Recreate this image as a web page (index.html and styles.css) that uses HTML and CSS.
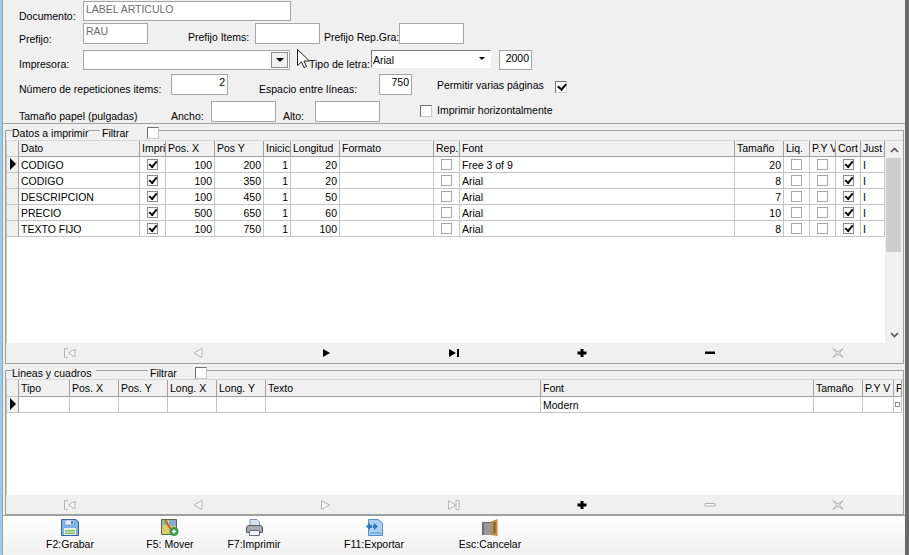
FILE: index.html
```html
<!DOCTYPE html>
<html lang="es">

<head>
    <meta charset="UTF-8">
    <title>Etiquetas</title>
    <link rel="stylesheet" href="styles.css">
</head>

<body>
    <div class="window">

        <!-- Datos generales -->
        <section class="form">
            <div class="row row-1">
                <label class="lbl l-doc">Documento:</label>
                <div class="box box-doc off">LABEL ARTICULO</div>
            </div>
            <div class="row row-2">
                <label class="lbl l-pre">Prefijo:</label>
                <div class="box box-pre off">RAU</div>
                <label class="lbl l-items">Prefijo Items:</label>
                <div class="box box-items"></div>
                <label class="lbl l-rep">Prefijo Rep.Gra:</label>
                <div class="box box-rep"></div>
            </div>
            <div class="row row-3">
                <label class="lbl l-imp">Impresora:</label>
                <div class="box box-imp">
                    <span class="drop"><i class="tri"></i></span>
                </div>
                <label class="lbl l-tipo">Tipo de letra:</label>
                <div class="box box-tipo">Arial<i class="tri tri-small"></i></div>
                <div class="box box-size num">2000</div>
            </div>
            <div class="row row-4">
                <label class="lbl l-num">Número de repeticiones items:</label>
                <div class="box box-num num">2</div>
                <label class="lbl l-esp">Espacio entre líneas:</label>
                <div class="box box-esp num">750</div>
                <label class="lbl l-perm">Permitir varias páginas</label>
                <span class="check check-perm on"></span>
            </div>
            <div class="row row-5">
                <label class="lbl l-tam">Tamaño papel (pulgadas)</label>
                <label class="lbl l-anc">Ancho:</label>
                <div class="box box-anc"></div>
                <label class="lbl l-alt">Alto:</label>
                <div class="box box-alt"></div>
                <span class="check check-hor"></span>
                <label class="lbl l-hor">Imprimir horizontalmente</label>
            </div>
        </section>

        <!-- Cursor del raton sobre el formulario -->
        <svg class="cursor" width="15" height="19" viewBox="0 0 15 19">
            <path d="M0.5 0.5V16.5L4.5 13L7 18.5L9.5 17.5L7 12H12.5Z" fill="#fff" stroke="#222" stroke-width="1" />
        </svg>

        <!-- Datos a imprimir -->
        <section class="group group-datos">
            <div class="legend">
                <span class="legend-text">Datos a imprimir</span>
                <span class="legend-filter">Filtrar</span>
                <span class="check check-filter"></span>
            </div>
            <div class="frame">
                <div class="grid-wrap">
                    <div class="grid datos">
                        <div class="tr head">
                            <div class="ind"></div>
                            <div>Dato</div>
                            <div>Impri</div>
                            <div>Pos. X</div>
                            <div>Pos Y</div>
                            <div>Inicic</div>
                            <div>Longitud</div>
                            <div>Formato</div>
                            <div>Rep.</div>
                            <div>Font</div>
                            <div>Tamaño</div>
                            <div>Liq.</div>
                            <div>P.Y V</div>
                            <div>Cort</div>
                            <div>Just</div>
                        </div>
                        <div class="tr">
                            <div class="ind cur"></div>
                            <div>CODIGO</div>
                            <div class="mid"><span class="cell-check on"></span></div>
                            <div class="num">100</div>
                            <div class="num">200</div>
                            <div class="num">1</div>
                            <div class="num">20</div>
                            <div></div>
                            <div class="mid"><span class="cell-check"></span></div>
                            <div>Free 3 of 9</div>
                            <div class="num">20</div>
                            <div class="mid"><span class="cell-check"></span></div>
                            <div class="mid"><span class="cell-check"></span></div>
                            <div class="mid"><span class="cell-check on"></span></div>
                            <div>I</div>
                        </div>
                        <div class="tr">
                            <div class="ind"></div>
                            <div>CODIGO</div>
                            <div class="mid"><span class="cell-check on"></span></div>
                            <div class="num">100</div>
                            <div class="num">350</div>
                            <div class="num">1</div>
                            <div class="num">20</div>
                            <div></div>
                            <div class="mid"><span class="cell-check"></span></div>
                            <div>Arial</div>
                            <div class="num">8</div>
                            <div class="mid"><span class="cell-check"></span></div>
                            <div class="mid"><span class="cell-check"></span></div>
                            <div class="mid"><span class="cell-check on"></span></div>
                            <div>I</div>
                        </div>
                        <div class="tr">
                            <div class="ind"></div>
                            <div>DESCRIPCION</div>
                            <div class="mid"><span class="cell-check on"></span></div>
                            <div class="num">100</div>
                            <div class="num">450</div>
                            <div class="num">1</div>
                            <div class="num">50</div>
                            <div></div>
                            <div class="mid"><span class="cell-check"></span></div>
                            <div>Arial</div>
                            <div class="num">7</div>
                            <div class="mid"><span class="cell-check"></span></div>
                            <div class="mid"><span class="cell-check"></span></div>
                            <div class="mid"><span class="cell-check on"></span></div>
                            <div>I</div>
                        </div>
                        <div class="tr">
                            <div class="ind"></div>
                            <div>PRECIO</div>
                            <div class="mid"><span class="cell-check on"></span></div>
                            <div class="num">500</div>
                            <div class="num">650</div>
                            <div class="num">1</div>
                            <div class="num">60</div>
                            <div></div>
                            <div class="mid"><span class="cell-check"></span></div>
                            <div>Arial</div>
                            <div class="num">10</div>
                            <div class="mid"><span class="cell-check"></span></div>
                            <div class="mid"><span class="cell-check"></span></div>
                            <div class="mid"><span class="cell-check on"></span></div>
                            <div>I</div>
                        </div>
                        <div class="tr">
                            <div class="ind"></div>
                            <div>TEXTO FIJO</div>
                            <div class="mid"><span class="cell-check on"></span></div>
                            <div class="num">100</div>
                            <div class="num">750</div>
                            <div class="num">1</div>
                            <div class="num">100</div>
                            <div></div>
                            <div class="mid"><span class="cell-check"></span></div>
                            <div>Arial</div>
                            <div class="num">8</div>
                            <div class="mid"><span class="cell-check"></span></div>
                            <div class="mid"><span class="cell-check"></span></div>
                            <div class="mid"><span class="cell-check on"></span></div>
                            <div>I</div>
                        </div>
                    </div>
                    <div class="scrollbar">
                        <span class="sb-btn"><svg width="9" height="6" viewBox="0 0 9 6"><path d="M1 5L4.5 1.5L8 5" fill="none" stroke="#555" stroke-width="1.6" /></svg></span>
                        <span class="sb-thumb"></span>
                        <span class="sb-space"></span>
                        <span class="sb-btn"><svg width="9" height="6" viewBox="0 0 9 6"><path d="M1 1L4.5 4.5L8 1" fill="none" stroke="#555" stroke-width="1.6" /></svg></span>
                    </div>
                </div>
                <div class="nav">
                    <svg class="ico" width="12" height="10" viewBox="0 0 12 10"><path d="M0.5 1V9M4 0.5H0.5M4 9.5H0.5M11 1V9L4.5 5Z" fill="#f8f8f8" stroke="#b4b4b4" /></svg>
                    <svg class="ico" width="12" height="10" viewBox="0 0 12 10"><path d="M10 0.5V9.5L2 5Z" fill="#f8f8f8" stroke="#b4b4b4" /></svg>
                    <svg class="ico" width="12" height="10" viewBox="0 0 12 10"><path d="M3 1V9L10 5Z" fill="#000" /></svg>
                    <svg class="ico" width="12" height="10" viewBox="0 0 12 10"><path d="M1 1V9L8 5Z M9 1H11V9H9Z" fill="#000" /></svg>
                    <svg class="ico" width="12" height="10" viewBox="0 0 12 10"><path d="M4.5 1H7.5V3.5H10.5V6.5H7.5V9H4.5V6.5H1.5V3.5H4.5Z" fill="#000" /></svg>
                    <svg class="ico" width="12" height="10" viewBox="0 0 12 10"><path d="M1 3.5H11V6H1Z" fill="#000" /></svg>
                    <svg class="ico" width="12" height="10" viewBox="0 0 12 10"><path d="M1 0.5L6 4L11 0.5M1 9.5L6 6L11 9.5M1 0.5L4.5 5L1 9.5M11 0.5L7.5 5L11 9.5" fill="none" stroke="#b4b4b4" /></svg>
                </div>
            </div>
        </section>

        <!-- Lineas y cuadros -->
        <section class="group group-lineas">
            <div class="legend">
                <span class="legend-text">Lineas y cuadros</span>
                <span class="legend-filter">Filtrar</span>
                <span class="check check-filter"></span>
            </div>
            <div class="frame">
                <div class="grid-wrap">
                    <div class="grid lineas">
                        <div class="tr head">
                            <div class="ind"></div>
                            <div>Tipo</div>
                            <div>Pos. X</div>
                            <div>Pos. Y</div>
                            <div>Long. X</div>
                            <div>Long. Y</div>
                            <div>Texto</div>
                            <div>Font</div>
                            <div>Tamaño</div>
                            <div>P.Y V</div>
                            <div>F</div>
                        </div>
                        <div class="tr">
                            <div class="ind cur"></div>
                            <div></div>
                            <div></div>
                            <div></div>
                            <div></div>
                            <div></div>
                            <div></div>
                            <div>Modern</div>
                            <div></div>
                            <div></div>
                            <div class="mid"><span class="mini-check"></span></div>
                        </div>
                    </div>
                </div>
                <div class="nav">
                    <svg class="ico" width="12" height="10" viewBox="0 0 12 10"><path d="M0.5 1V9M4 0.5H0.5M4 9.5H0.5M11 1V9L4.5 5Z" fill="#f8f8f8" stroke="#b4b4b4" /></svg>
                    <svg class="ico" width="12" height="10" viewBox="0 0 12 10"><path d="M10 0.5V9.5L2 5Z" fill="#f8f8f8" stroke="#b4b4b4" /></svg>
                    <svg class="ico" width="12" height="10" viewBox="0 0 12 10"><path d="M1.5 0.5V9.5L9.5 5Z" fill="#f8f8f8" stroke="#b4b4b4" /></svg>
                    <svg class="ico" width="12" height="10" viewBox="0 0 12 10"><path d="M0.5 0.5V9.5L7.5 5Z M11 0.5H8V9.5H11Z" fill="#f8f8f8" stroke="#b4b4b4" /></svg>
                    <svg class="ico" width="12" height="10" viewBox="0 0 12 10"><path d="M4.5 1H7.5V3.5H10.5V6.5H7.5V9H4.5V6.5H1.5V3.5H4.5Z" fill="#000" /></svg>
                    <svg class="ico" width="12" height="10" viewBox="0 0 12 10"><path d="M1 3.5H11V6H1Z" fill="#f8f8f8" stroke="#b4b4b4" /></svg>
                    <svg class="ico" width="12" height="10" viewBox="0 0 12 10"><path d="M1 0.5L6 4L11 0.5M1 9.5L6 6L11 9.5M1 0.5L4.5 5L1 9.5M11 0.5L7.5 5L11 9.5" fill="none" stroke="#b4b4b4" /></svg>
                </div>
            </div>
        </section>

        <!-- Barra de botones -->
        <footer class="toolbar">
            <div class="tool t-save">
                <svg width="18" height="17" viewBox="0 0 18 17">
                    <path d="M0.5 0.5H15L17.5 3V16.5H0.5Z" fill="#7fb2ea" stroke="#2f62a8" />
                    <path d="M4 1H13V6H4Z" fill="#dfe8f2" stroke="#5f86b8" stroke-width="0.5" />
                    <path d="M10 2H12V5H10Z" fill="#4a78b4" />
                    <path d="M3 9H15V16H3Z" fill="#e8f0dc" />
                    <path d="M4 11H14V12.5H4ZM4 13.5H14V15H4Z" fill="#7fbf6a" />
                </svg>
                <span>F2:Grabar</span>
            </div>
            <div class="tool t-move">
                <svg width="18" height="17" viewBox="0 0 18 17">
                    <path d="M0.5 0.5H15.5V15.5H0.5Z" fill="#d8cf6a" stroke="#56684a" />
                    <path d="M1 1H7V6H1ZM10 9H15V15H10Z" fill="#8fc48a" />
                    <path d="M8 1H15V7H8Z" fill="#8aa8d8" />
                    <path d="M4 1L12 14" stroke="#d04a30" stroke-width="1.5" />
                    <circle cx="13" cy="12.5" r="4.5" fill="#3f9a4a" />
                    <path d="M11 12.5H15M13 10.5V14.5" stroke="#fff" stroke-width="1.4" />
                </svg>
                <span>F5: Mover</span>
            </div>
            <div class="tool t-print">
                <svg width="17" height="17" viewBox="0 0 17 17">
                    <path d="M4 0.5H11L13.5 3V8H4Z" fill="#d6e6f6" stroke="#7d95b0" />
                    <path d="M0.5 9Q0.5 6.5 3 6.5H14Q16.5 6.5 16.5 9V13.5H0.5Z" fill="#a8acb2" stroke="#555a60" />
                    <path d="M3.5 11.5H13.5V16.5H3.5Z" fill="#f4f6f8" stroke="#6b7078" />
                </svg>
                <span>F7:Imprimir</span>
            </div>
            <div class="tool t-export">
                <svg width="17" height="17" viewBox="0 0 17 17">
                    <path d="M2.5 0.5H12L16.5 4V16.5H2.5Z" fill="#a9d0f2" stroke="#4f8fd0" />
                    <path d="M0 7.5L4 4V6H6V9H4V11Z" fill="#2f78c8" />
                    <path d="M12 7.5L8 4V6H7V9H8V11Z" fill="#2f78c8" />
                    <path d="M4 14H15" stroke="#4f8fd0" />
                </svg>
                <span>F11:Exportar</span>
            </div>
            <div class="tool t-exit">
                <svg width="16" height="17" viewBox="0 0 16 17">
                    <path d="M0 3H10V16H0Z" fill="#6f6f6f" />
                    <path d="M2 4H9V16H2Z" fill="#9a9a9a" />
                    <path d="M9 2.5L15.5 0V17L9 16Z" fill="#c08a4a" />
                    <path d="M12.5 3V14" stroke="#8a5a28" stroke-width="2" />
                </svg>
                <span>Esc:Cancelar</span>
            </div>
        </footer>
    </div>
</body>

</html>
```

FILE: styles.css
```css
* {
    margin: 0;
    padding: 0;
    box-sizing: border-box;
}

body {
    width: 909px;
    height: 555px;
    overflow: hidden;
    background-color: #f0f0f0;
    font-family: "Liberation Sans", Arial, sans-serif;
    font-size: 10.5px;
    color: #000;
}

/* Window frame: blue edge on the left, dark edge on the right */
.window {
    position: relative;
    width: 909px;
    height: 555px;
    background-color: #f0f0f0;
    border-left: 2px solid #9ccde8;
    border-right: 4px solid #6a6a6a;
    padding-left: 1px;
    box-shadow: inset 1px 0 0 #a0a0a0;
    display: flex;
    flex-direction: column;
}

/* Top form */
.form {
    height: 124px;
    border-bottom: 1px solid #a0a0a0;
    flex-shrink: 0;
}

.row {
    display: flex;
    align-items: flex-start;
}

.row-1 {
    height: 23px;
    padding-top: 1px;
}

.row-2 {
    height: 27px;
}

.row-3 {
    height: 24px;
}

.row-4 {
    height: 27px;
}

.row-5 {
    height: 22px;
}

.lbl {
    white-space: nowrap;
    line-height: 13px;
}

.box {
    background-color: #fff;
    border: 1px solid #a5a5a5;
    padding: 0 2px;
    line-height: 14px;
    flex-shrink: 0;
}

.box.off {
    color: #6d6d6d;
}

.num {
    text-align: right;
}

/* Labels and fields, left to right in each row */
.l-doc {
    width: 64px;
    margin: 9px 0 0 16px;
}

.box-doc {
    width: 208px;
    height: 20px;
}

.l-pre {
    width: 64px;
    margin: 10px 0 0 16px;
}

.box-pre {
    width: 65px;
    height: 21px;
}

.l-items {
    width: 67px;
    margin: 8px 0 0 40px;
}

.box-items {
    width: 65px;
    height: 21px;
}

.l-rep {
    width: 75px;
    margin: 8px 0 0 4px;
}

.box-rep {
    width: 65px;
    height: 21px;
}

.l-imp {
    width: 64px;
    margin: 8px 0 0 16px;
}

.box-imp {
    width: 207px;
    height: 20px;
    position: relative;
    padding: 0;
}

.drop {
    position: absolute;
    right: 1px;
    top: 1px;
    width: 17px;
    height: 16px;
    border: 1px solid #8c8c8c;
    background-color: #f0f0f0;
    display: flex;
    justify-content: center;
    align-items: center;
}

.tri {
    width: 0;
    height: 0;
    border-left: 4px solid transparent;
    border-right: 4px solid transparent;
    border-top: 4px solid #000;
}

.l-tipo {
    width: 62px;
    margin: 8px 0 0 19px;
}

.box-tipo {
    width: 120px;
    height: 18px;
    border-color: #7a7a7a #fff #fff #7a7a7a;
    position: relative;
    padding: 2px 0 0 1px;
}

.tri-small {
    position: absolute;
    right: 5px;
    top: 6px;
    border-left-width: 3px;
    border-right-width: 3px;
    border-top-width: 3px;
}

.box-size {
    width: 33px;
    height: 20px;
    margin-left: 8px;
}

.l-num {
    width: 152px;
    margin: 9px 0 0 16px;
}

.box-num {
    width: 57px;
    height: 21px;
}

.l-esp {
    width: 120px;
    margin: 9px 0 0 31px;
}

.box-esp {
    width: 33px;
    height: 21px;
}

.l-perm {
    width: 118px;
    margin: 5px 0 0 25px;
}

.check {
    display: block;
    width: 12px;
    height: 12px;
    background-color: #fff;
    border: 1px solid;
    border-color: #707070 #c8c8c8 #c8c8c8 #707070;
    flex-shrink: 0;
    position: relative;
}

.check.on::after,
.cell-check.on::after {
    content: "";
    position: absolute;
    left: 2px;
    top: 1px;
    width: 6px;
    height: 4px;
    border-left: 2px solid #000;
    border-bottom: 2px solid #000;
    transform: rotate(-50deg);
}

.check-perm {
    margin: 7px 0 0 0;
}

.l-tam {
    width: 152px;
    margin: 9px 0 0 16px;
}

.l-anc {
    width: 40px;
    margin: 9px 0 0 0;
}

.box-anc {
    width: 65px;
    height: 21px;
}

.l-alt {
    width: 32px;
    margin: 9px 0 0 7px;
}

.box-alt {
    width: 65px;
    height: 21px;
}

.check-hor {
    margin: 4px 0 0 40px;
}

.l-hor {
    margin: 3px 0 0 5px;
}

/* Group boxes */
.group {
    position: relative;
    flex-shrink: 0;
    margin: 0 1px 0 2px;
}

.group-datos {
    height: 240px;
    padding-top: 6px;
}

.group-lineas {
    height: 151px;
    padding-top: 6px;
}

.legend {
    display: flex;
    align-items: center;
    height: 13px;
    position: absolute;
    left: 0;
    top: 2px;
    z-index: 1;
}

.legend-text {
    margin-left: 7px;
    background-color: #f0f0f0;
    white-space: nowrap;
}

.group-datos .legend-text {
    width: 76px;
    margin-right: 12px;
}

.group-lineas .legend-text {
    width: 84px;
    margin-right: 52px;
}

.legend-filter {
    width: 47px;
    background-color: #f0f0f0;
    padding-left: 2px;
}

.frame {
    height: 100%;
    border: 1px solid #a0a0a0;
    display: flex;
    flex-direction: column;
}

.grid-wrap {
    flex: 1;
    background-color: #fff;
    display: flex;
    min-height: 0;
    border-top: 1px solid #d8d8d8;
    border-left: 1px solid #c4c4c4;
}

.group-datos .grid-wrap {
    margin-top: 9px;
}

.group-lineas .grid-wrap {
    margin-top: 8px;
}

.grid {
    flex: 1;
}

.tr {
    display: grid;
    height: 16px;
    background-color: #fff;
}

.datos .tr {
    grid-template-columns: 12px 121px 26px 49px 49px 27px 49px 94px 26px 275px 49px 26px 26px 25px 24px;
}

.lineas .tr {
    grid-template-columns: 12px 51px 49px 49px 49px 49px 275px 273px 49px 31px 8px;
}

.lineas .head {
    height: 17px;
}

.tr>div {
    border-right: 1px solid #c4c4c4;
    border-bottom: 1px solid #c4c4c4;
    padding: 1px 2px 0;
    line-height: 15px;
    white-space: nowrap;
    overflow: hidden;
}

.head {
    background-color: #f0f0f0;
}

.head>div {
    padding-top: 0;
    border-right-color: #a0a0a0;
    border-bottom-color: #a0a0a0;
}

.lineas .head>div {
    padding-top: 1px;
}

.tr>.ind {
    background-color: #f0f0f0;
    border-right-color: #a0a0a0;
    border-bottom-color: #c4c4c4;
    position: relative;
}

.ind.cur::after {
    content: "";
    position: absolute;
    left: 3px;
    top: 1px;
    border-left: 6px solid #000;
    border-top: 6px solid transparent;
    border-bottom: 6px solid transparent;
}

.tr>.mid {
    display: flex;
    justify-content: center;
    align-items: center;
    padding: 0;
}

.cell-check {
    display: block;
    width: 11px;
    height: 11px;
    border: 1px solid #a8a8a8;
    background-color: #fff;
    position: relative;
}

.cell-check.on {
    border-color: #8c8c8c;
}

.cell-check.on::after {
    left: 1px;
    top: 1px;
    width: 6px;
    height: 3px;
}

.mini-check {
    display: block;
    width: 5px;
    height: 5px;
    border: 1px solid #8c8c8c;
}

/* Scrollbar */
.scrollbar {
    width: 18px;
    display: flex;
    flex-direction: column;
    background-color: #f0f0f0;
    flex-shrink: 0;
}

.sb-btn {
    height: 17px;
    display: flex;
    justify-content: center;
    align-items: center;
}

.sb-thumb {
    height: 94px;
    margin: 0 2px 0 1px;
    background-color: #cdcdcd;
}

.sb-space {
    flex: 1;
}

/* Record navigator */
.nav {
    height: 20px;
    display: grid;
    grid-template-columns: repeat(7, 128px);
    justify-content: start;
    align-items: center;
    justify-items: center;
    flex-shrink: 0;
    background-color: #f0f0f0;
}

.group-lineas .nav {
    height: 19px;
}

.ico {
    display: block;
}

/* Bottom toolbar */
.toolbar {
    flex: 1;
    display: flex;
    border-top: 1px solid #a0a0a0;
    background: linear-gradient(#ffffff, #f0f0f0);
}

.tool {
    width: 70px;
    display: flex;
    flex-direction: column;
    align-items: center;
    padding-top: 3px;
    gap: 2px;
    white-space: nowrap;
    line-height: 13px;
}

.tool svg {
    display: block;
}

.t-save {
    margin-left: 32px;
}

.t-move {
    margin-left: 30px;
}

.t-print {
    margin-left: 14px;
}

.t-export {
    margin-left: 50px;
}

.t-exit {
    margin-left: 46px;
}

/* Mouse cursor drawn over the form */
.cursor {
    position: absolute;
    left: 295px;
    top: 49px;
    z-index: 2;
}
```
